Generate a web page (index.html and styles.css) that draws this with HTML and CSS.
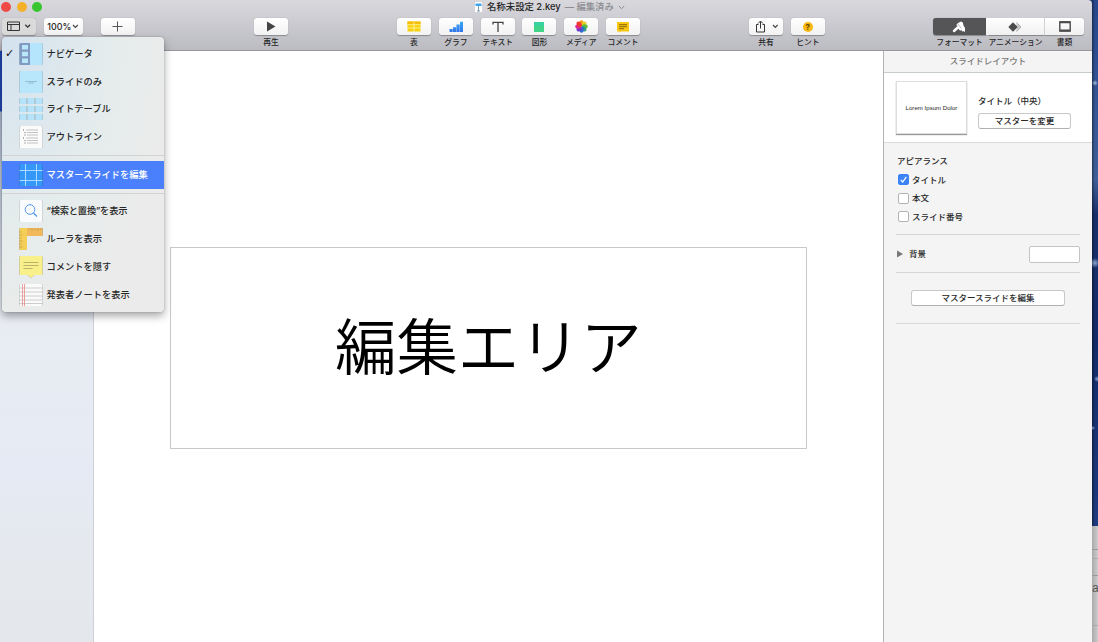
FILE: index.html
```html
<!DOCTYPE html>
<html lang="ja">
<head>
  <meta charset="UTF-8"/>
  <title>名称未設定 2.key</title>
  <link rel="stylesheet" href="styles.css">
</head>
<body>
  <div class="window">
    <!-- TOOLBAR -->
    <header class="toolbar">
      <div class="titlebar">
        <div class="lights">
          <span class="light red"></span>
          <span class="light yellow"></span>
          <span class="light green"></span>
        </div>
        <div class="doc-title">
          <svg width="9" height="12" viewBox="0 0 9 12"><rect x=".5" y=".5" width="8" height="11" fill="#fff" stroke="#c8c8cc" stroke-width=".6"/><path d="M1.500 2.500h6v2.500h-6z" fill="#3da5e8"/><path d="M4.500 5v5M3 10h3" stroke="#6c95ad" stroke-width=".9"/></svg>
          <span class="name">名称未設定 2.key</span>
          <span class="edited">— 編集済み</span>
          <svg width="7" height="5" viewBox="0 0 7 5"><path d="M.8 1l2.700 2.700L6.200 1" fill="none" stroke="#8d8d92"/></svg>
        </div>
      </div>

      <div class="tools">
        <div class="tool-group left">
          <div class="tool"><div class="button pressed">
            <svg width="26" height="11" viewBox="0 0 26 11"><path d="M1.500 1h12v8.500h-12zM1.500 3.500h12M5 3.500v6" fill="none" stroke="#333"/><path d="M19.300 3.700l2.400 2.400 2.400-2.400" fill="none" stroke="#333" stroke-width="1.300"/></svg>
          </div></div>
          <div class="tool zoom"><div class="button">100%
            <svg width="7" height="5" viewBox="0 0 7 5"><path d="M1 1l2.400 2.400L5.800 1" fill="none" stroke="#444" stroke-width="1.200"/></svg>
          </div></div>
          <div class="tool add"><div class="button">
            <svg width="11" height="11" viewBox="0 0 11 11"><path d="M5.500 .5v10M.5 5.500h10" stroke="#555"/></svg>
          </div></div>
        </div>

        <div class="tool-group play">
          <div class="tool">
            <div class="button"><svg width="10" height="11" viewBox="0 0 10 11"><path d="M1 .5l8.500 5L1 10.500z" fill="#444"/></svg></div>
            <span class="label">再生</span>
          </div>
        </div>

        <div class="tool-group insert">
          <div class="tool">
            <div class="button"><svg width="14" height="11" viewBox="0 0 14 11"><path d="M.5.500h13v10H.5z" fill="#f7d20c"/><path d="M.5.500h13v3H.5z" fill="#f5bd08"/><path d="M.5 3.700h13M.5 7h13M7 .5v10" stroke="#fff4ac" stroke-width=".8"/></svg></div>
            <span class="label">表</span>
          </div>
          <div class="tool">
            <div class="button"><svg width="14" height="12" viewBox="0 0 14 12"><defs><linearGradient id="bar" x2="0" y2="1"><stop stop-color="#36a9f6"/><stop offset="1" stop-color="#3575ea"/></linearGradient></defs><path d="M.5 8h3.200v3H.5zM4 6.200h3.200V11H4zM7.500 3.500h3.200V11H7.500zM11 .8h3V11h-3z" fill="url(#bar)"/></svg></div>
            <span class="label">グラフ</span>
          </div>
          <div class="tool">
            <div class="button"><svg width="12" height="12" viewBox="0 0 12 12"><path d="M1 3.500V1.300h10v2.200M6 1.300V11" fill="none" stroke="#444" stroke-width="1.300"/></svg></div>
            <span class="label">テキスト</span>
          </div>
          <div class="tool">
            <div class="button"><svg width="12" height="12" viewBox="0 0 12 12"><path d="M1 1h10v10H1z" fill="#42d58a"/><path d="M1 1h10v4H1z" fill="#39d3a0"/></svg></div>
            <span class="label">図形</span>
          </div>
          <div class="tool">
            <div class="button"><svg width="13" height="13" viewBox="-6.500 -6.500 13 13">
              <ellipse cy="-3.200" rx="2.200" ry="3" fill="#f79a17"/>
              <ellipse cy="-3.200" rx="2.200" ry="3" fill="#e4cf22" transform="rotate(45)"/>
              <ellipse cy="-3.200" rx="2.200" ry="3" fill="#62bd38" transform="rotate(90)"/>
              <ellipse cy="-3.200" rx="2.200" ry="3" fill="#2b9c8b" transform="rotate(135)"/>
              <ellipse cy="-3.200" rx="2.200" ry="3" fill="#3167d5" transform="rotate(180)"/>
              <ellipse cy="-3.200" rx="2.200" ry="3" fill="#713bc4" transform="rotate(225)"/>
              <ellipse cy="-3.200" rx="2.200" ry="3" fill="#df278e" transform="rotate(270)"/>
              <ellipse cy="-3.200" rx="2.200" ry="3" fill="#f03831" transform="rotate(315)"/>
            </svg></div>
            <span class="label">メディア</span>
          </div>
          <div class="tool">
            <div class="button"><svg width="12" height="12" viewBox="0 0 12 12"><path d="M0 1h12v9.500H4L2.500 11.500v-1H0z" fill="#f8c711"/><path d="M2 3.700h8M2 5.700h8M2 7.700h5" stroke="#7c5b00" stroke-width=".9"/></svg></div>
            <span class="label">コメント</span>
          </div>
        </div>

        <div class="tool-group share">
          <div class="tool">
            <div class="button"><svg width="25" height="13" viewBox="0 0 25 13"><path d="M4.500 4.500h-2v7.500h8V4.500h-2M6.500 8.500V1.500M4 3.500L6.500 1 9 3.500" fill="none" stroke="#333"/><path d="M19 5l2.300 2.300L23.600 5" fill="none" stroke="#444" stroke-width="1.200"/></svg></div>
            <span class="label">共有</span>
          </div>
          <div class="tool">
            <div class="button"><span class="hint">?</span></div>
            <span class="label">ヒント</span>
          </div>
        </div>

        <div class="segments">
          <div class="segment format active">
            <div class="seg-button"><svg width="14" height="12" viewBox="0 0 14 12"><path d="M5.500 2.300L9 .5l1.800 1 .7 3 1.500 2.500v4l-1.500-1-.8.700-1.200-1.500-1.500.3-1.500-1.500z" fill="#fff"/><path d="M5 3.300L9 8.300" stroke="#fff" stroke-width="1.800"/><path d="M5.800 6.500L2 10" stroke="#fff" stroke-width="2.500" stroke-linecap="round"/><path d="M6 3l3.500 4.500" stroke="#777" stroke-width=".5"/></svg></div>
            <span class="label">フォーマット</span>
          </div>
          <div class="segment animate">
            <div class="seg-button"><svg width="14" height="10" viewBox="0 0 14 10"><path d="M8.500 .5L13 5 8.500 9.500" fill="#ccc" stroke="#aaa"/><path d="M5 .3L9.700 5 5 9.700.3 5z" fill="#4b4b4b"/></svg></div>
            <span class="label">アニメーション</span>
          </div>
          <div class="segment document">
            <div class="seg-button"><svg width="12" height="11" viewBox="0 0 12 11"><path d="M.8 1h10.400v9H.8z" fill="none" stroke="#4b4b4b" stroke-width="1.400"/><path d="M.8 1.300h10.400M.8 9.500h10.400" stroke="#4b4b4b" stroke-width="2"/></svg></div>
            <span class="label">書類</span>
          </div>
        </div>
      </div>
    </header>

    <div class="content">
      <aside class="navigator"></aside>

      <main class="canvas">
        <div class="text-box">編集エリア</div>
      </main>

      <!-- INSPECTOR -->
      <aside class="inspector">
        <h2 class="inspector-title">スライドレイアウト</h2>
        <section class="layout-row">
          <div class="thumb">Lorem Ipsum Dolor</div>
          <div class="layout-info">
            <div class="layout-name">タイトル（中央）</div>
            <div class="push-button">マスターを変更</div>
          </div>
        </section>
        <section class="appearance">
          <h3>アピアランス</h3>
          <div class="check"><span class="box checked"><svg width="9" height="9" viewBox="0 0 9 9"><path d="M1.700 4.800l2 2.200L7.300 1.800" fill="none" stroke="#fff" stroke-width="1.200"/></svg></span>タイトル</div>
          <div class="check"><span class="box"></span>本文</div>
          <div class="check"><span class="box"></span>スライド番号</div>
        </section>
        <section class="background">
          <svg width="6" height="8" viewBox="0 0 6 8"><path d="M0 .5L6 4 0 7.500z" fill="#777"/></svg>
          <span>背景</span>
          <span class="color-well"></span>
        </section>
        <section class="edit-master">
          <div class="push-button">マスタースライドを編集</div>
        </section>
      </aside>
    </div>

    <!-- VIEW MENU -->
    <div class="menu">
      <div class="menu-item">
        <span class="tick">✓</span>
        <svg class="icon" viewBox="0 0 24 24"><rect x=".5" y="1" width="23" height="22" rx="1.500" fill="#b5e5fc"/><path d="M2 1h9v22H2Q.5 23 .5 21.500v-19Q.5 1 2 1z" fill="#8299c2"/><path d="M3 3h6v4.500H3zM3 9.700h6v4.500H3zM3 16.400h6v4.500H3z" fill="#b9e7fa"/></svg>
        ナビゲータ
      </div>
      <div class="menu-item">
        <span class="tick"></span>
        <svg class="icon" viewBox="0 0 24 24"><rect x=".5" y="1" width="23" height="22" rx="1.500" fill="#b8e6fb"/><path d="M6 11.500h12M9 13h6" stroke="#82abc0" stroke-width=".7"/></svg>
        スライドのみ
      </div>
      <div class="menu-item">
        <span class="tick"></span>
        <svg class="icon" viewBox="0 0 24 24"><g fill="#b5e3fa"><rect x=".5" y="1" width="7.200" height="6" rx="1"/><rect x="8.500" y="1" width="7.200" height="6" rx="1"/><rect x="16.500" y="1" width="7.200" height="6" rx="1"/><rect x=".5" y="9" width="7.200" height="6" rx="1"/><rect x="8.500" y="9" width="7.200" height="6" rx="1"/><rect x="16.500" y="9" width="7.200" height="6" rx="1"/><rect x=".5" y="17" width="7.200" height="6" rx="1"/><rect x="8.500" y="17" width="7.200" height="6" rx="1"/><rect x="16.500" y="17" width="7.200" height="6" rx="1"/></g></svg>
        ライトテーブル
      </div>
      <div class="menu-item">
        <span class="tick"></span>
        <svg class="icon" viewBox="0 0 24 24"><rect x=".5" y="1" width="23" height="22" rx="1.500" fill="#fbfbfb"/><path d="M4 5h1M5.500 7.500h1M5.500 10h1M4 13h1M5.500 15.500h1M5.500 18h1" stroke="#666" stroke-width="1.200"/><path d="M7 5h12M8 7.500h11M8 10h11M7 13h12M8 15.500h11M8 18h11" stroke="#b4b4b4" stroke-width=".8"/></svg>
        アウトライン
      </div>
      <div class="separator upper"></div>
      <div class="menu-item selected">
        <span class="tick"></span>
        <svg class="icon" viewBox="0 0 24 24"><rect x=".5" y="1" width="23" height="22" rx="1.500" fill="#3598f8"/><path d="M6.500 1v22M17.500 1v22M.5 7.500h23M.5 17.500h23" stroke="#a9dcff" stroke-width="1"/></svg>
        マスタースライドを編集
      </div>
      <div class="separator"></div>
      <div class="menu-item">
        <span class="tick"></span>
        <svg class="icon" viewBox="0 0 24 24"><rect x=".5" y="1" width="23" height="22" rx="1.500" fill="#fafbfc"/><circle cx="11" cy="10.500" r="4.800" fill="none" stroke="#4f98ed"/><path d="M14.500 14l3.500 3.500" stroke="#4f98ed" stroke-width="1.300"/></svg>
        <span class="find">“検索と置換”を表示</span>
      </div>
      <div class="menu-item">
        <span class="tick"></span>
        <svg class="icon" viewBox="0 0 24 24"><path d="M.5 1H8v22H.5z" fill="#f4cf58"/><path d="M8 1h15.500v8H8z" fill="#f1b95a"/><path d="M10 1v2M13 1v3M16 1v2M19 1v3M22 1v2M.5 5h2M.5 8h3M.5 11h2M.5 14h3M.5 17h2M.5 20h3" stroke="#b98f3c" stroke-width=".6"/></svg>
        ルーラを表示
      </div>
      <div class="menu-item">
        <span class="tick"></span>
        <svg class="icon" viewBox="0 0 24 24"><path d="M1.500 1h21q1 0 1 1v17q0 1-1 1h-7L12 23l-3.500-3h-7q-1 0-1-1V2q0-1 1-1z" fill="#f9f08b"/><path d="M4.500 7.500h15M4.500 10.500h15M4.500 13.500h9" stroke="#aaa562" stroke-width=".8"/></svg>
        コメントを隠す
      </div>
      <div class="menu-item">
        <span class="tick"></span>
        <svg class="icon" viewBox="0 0 24 24"><rect x=".5" y="1" width="23" height="22" rx="1.500" fill="#fafafa"/><path d="M.5 5h23M.5 9h23M.5 13h23M.5 17h23M.5 20.500h23" stroke="#c2c2c2" stroke-width=".8"/><path d="M3.500 1v22M5.500 1v22" stroke="#ee8585" stroke-width=".8"/></svg>
        発表者ノートを表示
      </div>
    </div>
  </div>

  <!-- desktop behind the window -->
  <div class="desktop">
    <div class="wallpaper"></div>
    <div class="other-window">a</div>
  </div>
</body>
</html>
```
FILE: styles.css
```css
/* 全体のスタイル */
* {
  box-sizing: border-box;
}

body {
  display: flex;
  height: 642px;
  margin: 0;
  overflow: hidden;
  background: #1d3972;
  color: #262626;
  font-family: Inter, "Noto Sans CJK JP", sans-serif;
  font-size: 8.5px;
  font-weight: 500;
  line-height: 12px;
  white-space: nowrap;
}

svg {
  display: block;
  flex: none;
}

.window {
  position: relative;
  display: flex;
  flex-direction: column;
  width: 1092px;
}

/* TOOLBAR */
.toolbar {
  height: 51px;
  border-bottom: 1px solid #97979c;
  border-top-right-radius: 4px;
  background: linear-gradient(#d8d8dd, #bbbbc2);
}

.titlebar {
  display: flex;
  height: 18px;
}

.lights {
  display: flex;
  gap: 5.500px;
  width: 474px;
  padding: 2px 0 0 1px;
}

.light {
  width: 10px;
  height: 10px;
  border-radius: 50%;
}

.red { background: #f04a47; }
.yellow { background: #f5b02a; }
.green { background: #37c630; }

.doc-title {
  display: flex;
  align-items: center;
  height: 14px;
  color: #8d8d92;
  font-size: 9.3px;
}

.doc-title .name {
  margin: 0 4px 0 4px;
  color: #262626;
  font-size: 9.4px;
}

.doc-title .edited {
  margin-right: 4px;
}

.tools {
  display: flex;
  height: 32px;
}

.tool-group {
  display: flex;
  gap: 7.8px;
}

.left { width: 254px; padding-left: 2px; }
.play { width: 143px; }
.insert { width: 352px; }
.share { width: 184px; }

.tool {
  display: flex;
  flex-direction: column;
  align-items: center;
  width: 34px;
}

.zoom { width: 39px; }
.add { margin-left: 10px; }

.button {
  display: flex;
  align-items: center;
  justify-content: center;
  gap: 1px;
  width: 100%;
  height: 17px;
  border-radius: 3px;
  background: linear-gradient(#fff, #f2f2f3);
  box-shadow: 0 .5px 1px rgba(0, 0, 0, .3);
  font-size: 8.9px;
}

.pressed {
  background: #dadadb;
}

.label {
  margin-top: 1px;
  font-size: 7.75px;
}

.hint {
  width: 10px;
  height: 10px;
  border-radius: 50%;
  background: #f8b80e;
  color: #5c4100;
  font-size: 8px;
  font-weight: bold;
  line-height: 10px;
  text-align: center;
}

.segments {
  display: flex;
}

.segment {
  display: flex;
  flex-direction: column;
  align-items: center;
}

.format { width: 53px; }
.animate { width: 59px; }
.document { width: 39px; }

.seg-button {
  display: flex;
  align-items: center;
  justify-content: center;
  width: 100%;
  height: 17px;
  border-right: 1px solid #d8d8db;
  background: linear-gradient(#fff, #f0f0f1);
  box-shadow: 0 .5px 1px rgba(0, 0, 0, .3);
}

.active .seg-button {
  border-color: #555;
  border-radius: 3px 0 0 3px;
  background: #555557;
}

.document .seg-button {
  border: 0;
  border-radius: 0 3px 3px 0;
}

/* CONTENT */
.content {
  display: flex;
  flex: 1;
}

.navigator {
  width: 94px;
  border-right: 1px solid #cdd0d5;
  background: linear-gradient(#2146b3 60px, #a9b8cf 61px, #e8ecf2 270px, #e5eaf4 420px, #e5e8ec 530px, #e4e8ed);
}

.canvas {
  flex: 1;
  padding: 196px 76px 0;
  background: #fff;
}

.text-box {
  display: flex;
  align-items: center;
  justify-content: center;
  height: 202px;
  padding: 0 0 8px;
  border: 1px solid #c8c8c8;
  color: #000;
  font-family: "Noto Sans CJK JP DemiLight", "Noto Sans CJK JP", sans-serif;
  font-size: 61.4px;
  font-weight: 350;
  line-height: 80px;
}

/* INSPECTOR */
.inspector {
  width: 209px;
  border-left: 1px solid #b4b4b6;
  background: #f4f4f4;
}

.inspector-title {
  height: 22px;
  margin: 0;
  border-bottom: 1px solid #c6cccc;
  color: #777;
  font-size: 8.5px;
  font-weight: 500;
  line-height: 21px;
  text-align: center;
}

.layout-row {
  display: flex;
  gap: 11px;
  height: 70px;
  padding: 8px 0 0 12px;
  border-bottom: 1px solid #d9d9d9;
  background: #fff;
}

.thumb {
  width: 71px;
  height: 53px;
  border: 1px solid #ddd;
  box-shadow: 0 1px 1px #999;
  font-family: "Liberation Sans", sans-serif;
  font-size: 6.1px;
  line-height: 52px;
  text-align: center;
}

.layout-info {
  padding-top: 14px;
}

.layout-name {
  margin-bottom: 6px;
}

.push-button {
  height: 16px;
  border: 1px solid #c8c8c8;
  border-bottom-color: #b0b0b0;
  border-radius: 3px;
  background: #fff;
  line-height: 14px;
  text-align: center;
}

.layout-info .push-button {
  width: 93px;
}

.appearance {
  height: 92px;
  margin: 0 12px;
  padding: 12px 0 0 2px;
  border-bottom: 1px solid #d6d6d6;
}

.appearance h3 {
  margin: 0 0 3.500px -1px;
  font-size: 8.5px;
  font-weight: 500;
}

.check {
  display: flex;
  align-items: center;
  gap: 3px;
  height: 18.500px;
}

.box {
  width: 11px;
  height: 11px;
  border: 1px solid #b3b3b3;
  border-radius: 2px;
  background: #fff;
}

.checked {
  border-color: #3b83f7;
  background: #3b83f7;
}

.background {
  display: flex;
  align-items: center;
  gap: 6px;
  height: 38px;
  margin: 0 12px;
  padding: 1px 0 0 1px;
  border-bottom: 1px solid #d6d6d6;
}

.color-well {
  width: 51px;
  height: 17px;
  margin-left: auto;
  border: 1px solid #c4c4c4;
  border-radius: 2px;
  background: #fff;
}

.edit-master {
  height: 51px;
  margin: 0 12px;
  padding: 17px 15px 0;
  border-bottom: 1px solid #d9d9d9;
}

/* VIEW MENU */
.menu {
  position: absolute;
  top: 37px;
  left: 2px;
  width: 162px;
  height: 275px;
  padding-top: 3px;
  border-radius: 4px;
  background: radial-gradient(ellipse at 0 0, #d3e2ef, #e5ecec 110px, #ebebeb 170px);
  box-shadow: 0 0 1px rgba(0, 0, 0, .6), 0 4px 9px rgba(0, 0, 0, .35);
}

.menu-item {
  display: flex;
  align-items: center;
  height: 27.800px;
  font-size: 9.25px;
}

.selected {
  background: #4a80fb;
  color: #fff;
}

.tick {
  width: 16.500px;
  padding-left: 3px;
  color: #111;
  font-family: "DejaVu Sans", sans-serif;
  font-size: 11px;
  font-weight: bold;
}

.find {
  letter-spacing: -.2px;
}

.icon {
  width: 24px;
  height: 24px;
  margin-right: 4px;
  filter: drop-shadow(0 .5px .7px rgba(0, 0, 0, .5));
}

.separator {
  height: 8.800px;
  padding-top: 4px;
}

.upper {
  height: 9.800px;
}

.separator::before {
  content: '';
  display: block;
  height: 1px;
  background: #d2d2d2;
}

/* DESKTOP */
.desktop {
  width: 6px;
}

.wallpaper {
  height: 526px;
  background:
    radial-gradient(circle at 3px 83px, #a8bddb, transparent 3px),
    radial-gradient(circle at 3px 263px, #8ba6cf, transparent 5px),
    radial-gradient(circle at 5px 379px, #8ba6cf, transparent 3px),
    radial-gradient(circle at 1px 428px, #8ba6cf, transparent 2px),
    linear-gradient(90deg, rgba(0, 0, 0, .4), transparent 3px),
    linear-gradient(#26468d, #3f5f98 180px, #172f69 215px, #172f69 250px, #122b68 340px, #1d3b7e);
}

.other-window {
  height: 116px;
  padding-top: 56px;
  overflow: hidden;
  background:
    linear-gradient(#999, #999) 0 23px / 6px 1px no-repeat,
    linear-gradient(#aaa, #aaa) 0 32px / 6px 1px no-repeat,
    linear-gradient(#999, #999) 0 49px / 6px 1px no-repeat,
    linear-gradient(#aaa, #aaa) 0 99px / 6px 1px no-repeat,
    linear-gradient(90deg, #aaa, #ccc);
  color: #555;
  font-family: "Liberation Sans", sans-serif;
  font-size: 12px;
}
```
